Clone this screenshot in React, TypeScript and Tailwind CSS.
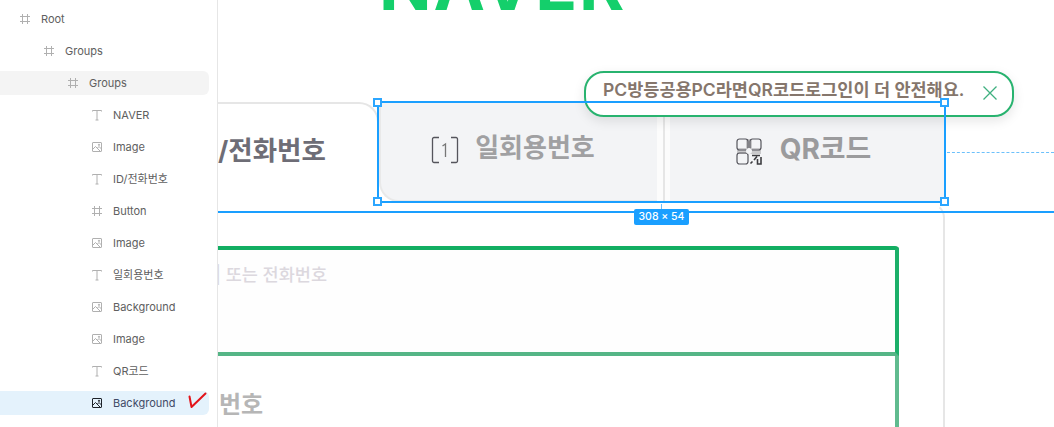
import React from "react";

const KR = "font-['Inter','Noto_Sans_CJK_KR',sans-serif]";

function Hash() {
  return (
    <svg width="12" height="12" viewBox="0 0 12 12" fill="none" stroke="#b0b0b0" strokeWidth="1">
      <path d="M3.5 1v10M8.5 1v10M1 3.5h10M1 8.5h10" />
    </svg>
  );
}
function TIcon() {
  return (
    <svg width="12" height="12" viewBox="0 0 12 12" fill="none" stroke="#b0b0b0" strokeWidth="1">
      <path d="M1.5 2.5V1.5h9v1M6 1.5v9.5M4.5 11h3" />
    </svg>
  );
}
function ImgIcon({ dark }: { dark?: boolean }) {
  const c = dark ? "#1d2229" : "#b0b0b0";
  return (
    <svg width="12" height="12" viewBox="0 0 12 12" fill="none" stroke={c} strokeWidth="1">
      <rect x="1.5" y="1.5" width="9" height="9" rx="0.5" />
      <path d="M1.5 8.5l3-3 5 5M6.5 7l1.5-1.5 2.5 2.5" />
      <circle cx="8" cy="3.8" r="0.6" fill={c} />
    </svg>
  );
}

type Row = { label: string; icon: "hash" | "t" | "img"; pad: string; state?: "hover" | "selected" };
const rows: Row[] = [
  { label: "Root", icon: "hash", pad: "pl-[19px]" },
  { label: "Groups", icon: "hash", pad: "pl-[43px]" },
  { label: "Groups", icon: "hash", pad: "pl-[67px]", state: "hover" },
  { label: "NAVER", icon: "t", pad: "pl-[91px]" },
  { label: "Image", icon: "img", pad: "pl-[91px]" },
  { label: "ID/전화번호", icon: "t", pad: "pl-[91px]" },
  { label: "Button", icon: "hash", pad: "pl-[91px]" },
  { label: "Image", icon: "img", pad: "pl-[91px]" },
  { label: "일회용번호", icon: "t", pad: "pl-[91px]" },
  { label: "Background", icon: "img", pad: "pl-[91px]" },
  { label: "Image", icon: "img", pad: "pl-[91px]" },
  { label: "QR코드", icon: "t", pad: "pl-[91px]" },
  { label: "Background", icon: "img", pad: "pl-[91px]", state: "selected" },
];

function Sidebar() {
  return (
    <aside className={`relative z-20 flex h-full w-[218px] shrink-0 flex-col gap-2 border-r border-r-[#e6e6e6] bg-white pt-[7px] pr-2 ${KR}`}>
      {rows.map((r, i) => (
        <div
          key={i}
          className={`flex h-6 shrink-0 items-center gap-[10px] rounded-r-[6px] text-[11px] ${r.pad} ${
            r.state === "hover" ? "bg-[#f4f4f4] text-[#606060]" : r.state === "selected" ? "bg-[#e4f2fc] text-[#3f4a66]" : "text-[#606060]"
          }`}
        >
          <span className="flex w-3 justify-center">
            {r.icon === "hash" && <Hash />}
            {r.icon === "t" && <TIcon />}
            {r.icon === "img" && <ImgIcon dark={r.state === "selected"} />}
          </span>
          <span>{r.label}</span>
        </div>
      ))}
      <svg className="absolute left-[187px] top-[391px]" width="21" height="20" viewBox="0 0 21 20" fill="none" stroke="#e3141a" strokeWidth="2" strokeLinecap="round" strokeLinejoin="round">
        <path d="M2.5 5.5L4.5 16L18.5 2.5" />
      </svg>
    </aside>
  );
}

function Handle({ className }: { className: string }) {
  return <div className={`absolute h-[9px] w-[9px] border-2 border-[#2ca6ff] bg-white ${className}`} />;
}

function Tabs() {
  return (
    <div className="flex flex-1 pt-px">
      <div className="flex w-[278px] items-center justify-center gap-[16px] rounded-bl-[20px] border-b-2 border-l-2 border-[#e9e9e9] bg-[#f3f4f6] pr-[12px]">
        <svg width="28" height="28" viewBox="0 0 28 28" fill="none" stroke="#55555c" strokeWidth="1.3" className="mb-[3px]">
          <path d="M8 1.5H3a1.5 1.5 0 0 0-1.5 1.5v22A1.5 1.5 0 0 0 3 26.5h5M20 1.5h5A1.5 1.5 0 0 1 26.5 3v22a1.5 1.5 0 0 1-1.5 1.5h-5" />
          <path d="M11.5 10l3-2v13" stroke="#777" />
        </svg>
        <span className="mb-2 text-[26px] font-bold leading-[32px] text-[#a0a0a2]">일회용번호</span>
      </div>
      <div className="flex w-[13px] justify-center bg-[#fcfcfc]">
        <div className="w-[2px] bg-[#e6e6e6]" />
      </div>
      <div className="flex flex-1 items-center justify-center gap-[18px] bg-[#f3f4f6] pr-[8px]">
        <svg width="26" height="27" viewBox="0 0 26 27" fill="none" stroke="#55555c" strokeWidth="1.2" className="mb-[3px]">
          <rect x="1" y="10" width="24" height="6" fill="#c9c9cb" stroke="none" />
          <rect x="10" y="1" width="6" height="15" fill="#c9c9cb" stroke="none" />
          <rect x="1" y="1" width="11" height="11" rx="2.5" />
          <rect x="14" y="1" width="11" height="11" rx="2.5" />
          <rect x="1" y="15" width="11" height="11" rx="2.5" />
          <circle cx="13" cy="13" r="3" fill="#f3f4f6" stroke="none" />
          <path d="M14.5 25.5l2-2M18 22l3-3.5M16 17.5h8M21.5 21v5h3.5v-7" strokeWidth="1.6" stroke="#3c3c40" />
        </svg>
        <span className="mb-[7px] text-[28px] font-bold leading-[34px] text-[#9b9b9d]">QR코드</span>
      </div>
    </div>
  );
}

function Form() {
  return (
    <div className="flex w-[681px] flex-1 flex-col">
      <div className="h-[110px] shrink-0 rounded-tr-[4px] border-t-4 border-r-4 border-b-4 border-t-[#12ae62] border-r-[#1baf69] border-b-[#55b586] bg-[#fefefe] pt-[15px] text-[17.5px] font-medium leading-[20px] text-[#dcd8de]">
        <span className="-ml-[3px] block">| 또는 전화번호</span>
      </div>
      <div className="flex-1 border-r-4 border-r-[#60bb8f] pt-[33px] pl-px text-[24px] font-bold leading-[32px] text-[#b6b6b6]">번호</div>
    </div>
  );
}

function Canvas() {
  return (
    <main className={`relative flex h-full flex-1 flex-col overflow-hidden bg-white ${KR}`}>
      <div className="h-[102px] shrink-0 pl-[161px]">
        <div className="-mt-[48px] text-[69px] font-bold leading-[66px] tracking-[2px] text-[#14cf6b]">NAVER</div>
      </div>

      <div className="flex h-[100px] w-[727px] shrink-0">
        <div className="w-[161px] rounded-tr-[20px] border-t-2 border-r-2 border-[#e6e6e6] pt-[30px] text-[26.5px] font-bold leading-[32px] whitespace-nowrap text-[#6e6d76]">/전화번호</div>
        <Tabs />
      </div>

      <div className="flex w-[727px] flex-1 flex-col rounded-tr-[16px] border-t-2 border-r-2 border-t-transparent border-r-[#e6e6e6] pt-[42px]">
        <Form />
      </div>

      <div className="absolute left-[366px] top-[71px] flex h-[46px] w-[430px] items-center justify-between rounded-[20px] border-2 border-[#28b36f] bg-white pr-[14px] pl-[17px] shadow-[0_4px_12px_rgba(0,0,0,0.1)]">
        <span className="mb-[9px] whitespace-nowrap text-[17.5px] font-semibold leading-[24px] text-[#85766c]">PC방등공용PC라면QR코드로그인이 더 안전해요.</span>
        <svg width="16" height="16" viewBox="0 0 16 16" fill="none" stroke="#3fb07f" strokeWidth="1.3" className="mb-[2px]">
          <path d="M1.5 1.5l13 13M14.5 1.5l-13 13" />
        </svg>
      </div>

      <div className="absolute left-[159px] top-[101px] h-[102px] w-[569px] border-2 border-[#1a9fff]">
        <Handle className="left-[-6px] top-[-5px]" />
        <Handle className="right-[-5px] top-[-5px]" />
        <Handle className="bottom-[-5px] left-[-6px]" />
        <Handle className="bottom-[-5px] right-[-5px]" />
      </div>
      <div className="absolute left-0 right-0 top-[211px] h-[2px] bg-[#1a9fff]" />
      <div className="absolute left-[729px] right-0 top-[152px] border-t border-dashed border-t-[#6cc0fb]" />
      <div className="absolute left-[443px] top-[204px] h-[6px] border-l border-dashed border-l-[#6cc0fb]" />
      <div className="absolute left-[416px] top-[209px] flex h-4 w-[55px] items-center justify-center rounded-[2px] bg-[#1a9fff] text-[10.5px] font-medium text-white">308 × 54</div>
    </main>
  );
}

export default function App() {
  return (
    <div className="flex h-[427px] w-[1054px] overflow-hidden bg-white">
      <Sidebar />
      <Canvas />
    </div>
  );
}
